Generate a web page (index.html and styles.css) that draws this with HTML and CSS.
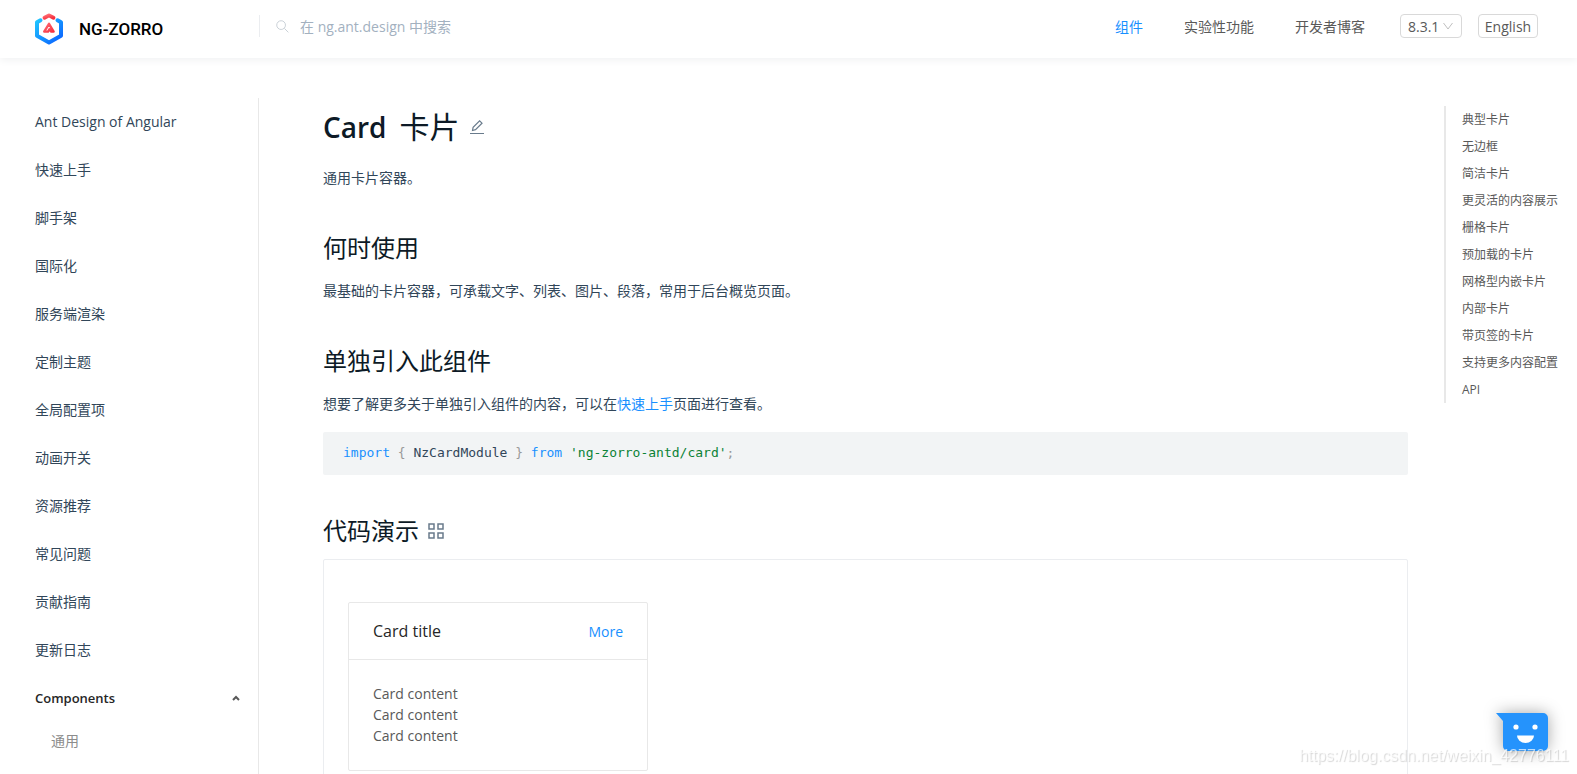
FILE: index.html
```html
<!DOCTYPE html>
<html lang="zh-CN">
<head>
<meta charset="utf-8">
<title>Card 卡片 - NG-ZORRO</title>
<link rel="stylesheet" href="styles.css">
</head>
<body>
<header class="header">
  <a class="logo" href="#">
    <svg class="logo-mark" viewBox="0 0 28 32" aria-hidden="true">
      <defs>
        <linearGradient id="blue" x1="0" y1="0" x2="1" y2="1"><stop offset="0" stop-color="#1fc3ff"/><stop offset="1" stop-color="#0a60ff"/></linearGradient>
        <linearGradient id="red" x1="0" y1="0" x2="1" y2="1"><stop offset="0" stop-color="#ff6a70"/><stop offset="1" stop-color="#f5303f"/></linearGradient>
      </defs>
      <path d="M5.500 7.300 L2 9.300 V22.700 L14 29.500 L26 22.700 V9.300 L22.500 7.300" fill="none" stroke="url(#blue)" stroke-width="4" stroke-linejoin="round" stroke-linecap="round"/>
      <path d="M9.500 4.800 L14 2.400 L18.500 4.800" fill="none" stroke="url(#red)" stroke-width="3.800" stroke-linejoin="round" stroke-linecap="round"/>
      <path d="M14 10.800 L9.200 18.600 H13 L14.500 16.200 L16.200 18.600 H18.600 Z" fill="none" stroke="url(#red)" stroke-width="2.400" stroke-linejoin="round"/>
    </svg>
    <span>NG-ZORRO</span>
  </a>
  <label class="search">
    <svg class="search-icon" viewBox="0 0 14 14" aria-hidden="true"><circle cx="5.500" cy="5.500" r="4.700"/><path d="M9 9l4.300 4.300"/></svg>
    <input type="text" placeholder="在 ng.ant.design 中搜索" aria-label="搜索">
  </label>
  <nav class="top-nav">
    <a class="active" href="#">组件</a>
    <a href="#">实验性功能</a>
    <a href="#">开发者博客</a>
  </nav>
  <div class="version">
    <select aria-label="版本"><option>8.3.1</option></select>
    <svg viewBox="0 0 10 8" aria-hidden="true"><path d="M.500 1l4.500 6 4.500-6"/></svg>
  </div>
  <button class="lang" type="button">English</button>
</header>
<div class="layout">
  <nav class="sidebar">
    <a href="#">Ant Design of Angular</a>
    <a href="#">快速上手</a>
    <a href="#">脚手架</a>
    <a href="#">国际化</a>
    <a href="#">服务端渲染</a>
    <a href="#">定制主题</a>
    <a href="#">全局配置项</a>
    <a href="#">动画开关</a>
    <a href="#">资源推荐</a>
    <a href="#">常见问题</a>
    <a href="#">贡献指南</a>
    <a href="#">更新日志</a>
    <button class="group" type="button">Components
      <svg viewBox="0 0 8 6" aria-hidden="true"><path d="M1 5l3-3 3 3"/></svg>
    </button>
    <div class="group-title">通用</div>
  </nav>
  <main class="content">
    <h1><span class="name">Card</span><span>卡片</span>
      <a class="edit" href="#" aria-label="编辑"><svg viewBox="0 0 16 16" aria-hidden="true"><path d="M1 14.500h14M3.500 11.500l.600-3.200L10.600 1.800l2.400 2.400-6.500 6.500z"/></svg></a>
    </h1>
    <p>通用卡片容器。</p>
    <h2>何时使用</h2>
    <p>最基础的卡片容器，可承载文字、列表、图片、段落，常用于后台概览页面。</p>
    <h2>单独引入此组件</h2>
    <p>想要了解更多关于单独引入组件的内容，可以在<a href="#">快速上手</a>页面进行查看。</p>
    <pre><code><span class="kw">import</span> <span class="pn">{</span> NzCardModule <span class="pn">}</span> <span class="kw">from</span> <span class="str">'ng-zorro-antd/card'</span><span class="pn">;</span></code></pre>
    <h2 class="demo-heading">代码演示
      <svg viewBox="0 0 16 16" aria-hidden="true"><path d="M1 1h5v5H1zM10 1h5v5h-5zM1 10h5v5H1zM10 10h5v5h-5z"/></svg>
    </h2>
    <section class="demo">
      <article class="card">
        <header class="card-head"><h3>Card title</h3><a href="#">More</a></header>
        <div class="card-body"><p>Card content</p><p>Card content</p><p>Card content</p></div>
      </article>
    </section>
  </main>
  <aside class="anchors">
    <nav>
      <a href="#">典型卡片</a>
      <a href="#">无边框</a>
      <a href="#">简洁卡片</a>
      <a href="#">更灵活的内容展示</a>
      <a href="#">栅格卡片</a>
      <a href="#">预加载的卡片</a>
      <a href="#">网格型内嵌卡片</a>
      <a href="#">内部卡片</a>
      <a href="#">带页签的卡片</a>
      <a href="#">支持更多内容配置</a>
      <a href="#">API</a>
    </nav>
  </aside>
</div>
<button class="chat" type="button" aria-label="反馈">
  <svg viewBox="0 0 52 38" aria-hidden="true"><path d="M0 0H47a5 5 0 0 1 5 5V33a5 5 0 0 1-5 5H12a5 5 0 0 1-5-5V8z" fill="#2593fc"/><circle cx="20" cy="14" r="2.600" fill="#fff"/><circle cx="39" cy="14" r="2.600" fill="#fff"/><path d="M21 22.500h17a8.500 7.500 0 0 1-17 0z" fill="#fff"/></svg>
</button>
<div class="watermark">https://blog.csdn.net/weixin_42776111</div>
</body>
</html>
```
FILE: styles.css
```css
* { box-sizing: border-box; }
body {
  margin: 0;
  height: 100vh;
  overflow: hidden;
  display: flex;
  flex-direction: column;
  background: #fff;
  color: #314659;
  font: 14px/21px "Open Sans", "Noto Sans CJK SC", sans-serif;
}
a { color: #1890ff; text-decoration: none; }
button, input, select { font: inherit; color: inherit; }

.header {
  flex: none;
  position: relative;
  display: flex;
  align-items: center;
  height: 58px;
  padding: 0 39px 6px 35px;
  box-shadow: 0 2px 8px #f0f1f2;
}
.logo {
  display: flex;
  align-items: center;
  gap: 16px;
  width: 224px;
  padding-top: 6px;
  color: #000;
  font: 500 17px/24px Roboto, sans-serif;
}
.logo-mark { width: 28px; height: 32px; }
.search {
  flex: 1;
  display: flex;
  align-items: center;
  gap: 11px;
  height: 22px;
  padding-left: 16px;
  border-left: 1px solid #ebedf0;
}
.search-icon { width: 13px; height: 13px; fill: none; stroke: #c6cdd4; }
.search input { flex: 1; min-width: 0; padding: 0; border: 0; outline: 0; background: none; }
.search input::placeholder { color: #a3b1bf; opacity: 1; }
.top-nav { display: flex; gap: 41px; margin-right: 35px; }
.top-nav a { color: #595959; }
.top-nav .active { color: #1890ff; }
.version { position: relative; margin-right: 16px; }
.version select {
  display: block;
  width: 62px;
  height: 24px;
  padding: 0 7px;
  border: 1px solid #d9d9d9;
  border-radius: 4px;
  background: #fff;
  appearance: none;
  color: #595959;
}
.version svg { position: absolute; top: 8px; right: 9px; width: 10px; height: 8px; fill: none; stroke: #bfbfbf; pointer-events: none; }
.lang {
  width: 60px;
  height: 24px;
  padding: 0;
  border: 1px solid #d9d9d9;
  border-radius: 4px;
  background: #fff;
  color: #595959;
}

.layout { flex: 1; min-height: 0; display: flex; padding-top: 40px; }
.sidebar { flex: none; width: 259px; padding-top: 4px; border-right: 1px solid #e8e8e8; }
.sidebar a { display: block; height: 40px; margin-bottom: 8px; padding-left: 35px; line-height: 40px; color: #314659; }
.group {
  display: flex;
  align-items: center;
  justify-content: space-between;
  width: 100%;
  height: 40px;
  padding: 0 18px 0 35px;
  border: 0;
  background: none;
  color: #262626;
  font-size: 13px;
  font-weight: 600;
}
.group svg { width: 8px; height: 6px; fill: none; stroke: #595959; stroke-width: 2; }
.group-title { padding: 12px 0 0 51px; color: #8c8c8c; }

.content { flex: 1; min-width: 0; padding: 8px 36px 0 64px; }
h1, h2, h3, p, pre { margin: 0; }
h1 { display: flex; align-items: center; gap: 9px; margin-bottom: 19px; color: #0d1a26; font-size: 30px; line-height: 42px; font-weight: 400; }
h1 .name { margin-right: 4px; font-size: 28px; font-weight: 600; }
.edit { height: 16px; line-height: 0; }
.edit svg { width: 16px; height: 16px; fill: none; stroke: #697b8c; stroke-width: 1.2; }
h2 { margin: 43px 0 16px; color: #0d1a26; font-size: 24px; line-height: 32px; font-weight: 400; }
.content > p { line-height: 22px; }
pre {
  margin-top: 17px;
  padding: 10px 20px 12px;
  border-radius: 2px;
  background: #f2f4f5;
  font: 13px/21px "DejaVu Sans Mono", monospace;
}
code { font: inherit; }
.kw { color: #1890ff; }
.pn { color: #999; }
.str { color: #0b8235; }
.demo-heading { display: flex; align-items: center; gap: 9px; margin: 40px 0 12px; }
.demo-heading svg { width: 16px; height: 16px; fill: none; stroke: #697b8c; stroke-width: 1.5; }
.demo { min-height: 280px; padding: 42px 24px; border: 1px solid #ebedf0; border-radius: 2px; }
.card { width: 300px; border: 1px solid #e8e8e8; border-radius: 2px; }
.card-head { display: flex; align-items: center; justify-content: space-between; height: 57px; padding: 0 24px; border-bottom: 1px solid #e8e8e8; }
.card-head h3 { color: #262626; font-size: 16px; line-height: 24px; font-weight: 500; }
.card-body { padding: 23px 24px 24px; color: #595959; }

.anchors { flex: none; width: 133px; padding-top: 8px; }
.anchors nav { padding: 5px 0 5px 16px; border-left: 2px solid #e8e8e8; font-size: 12px; }
.anchors a { display: block; line-height: 17px; margin-bottom: 10px; color: #595959; white-space: nowrap; }
.anchors a:last-child { margin-bottom: 0; }

.chat { position: fixed; right: 29px; bottom: 23px; padding: 0; border: 0; background: none; line-height: 0; }
.chat svg { width: 52px; height: 38px; overflow: visible; filter: drop-shadow(0 0 8px rgba(0, 0, 0, .35)); }
.watermark {
  position: fixed;
  right: 8px;
  bottom: 8px;
  color: rgba(255, 255, 255, .7);
  font: 16px/20px "Liberation Sans", sans-serif;
  text-shadow: 1px 1px 1px rgba(0, 0, 0, .16);
  pointer-events: none;
}
```
